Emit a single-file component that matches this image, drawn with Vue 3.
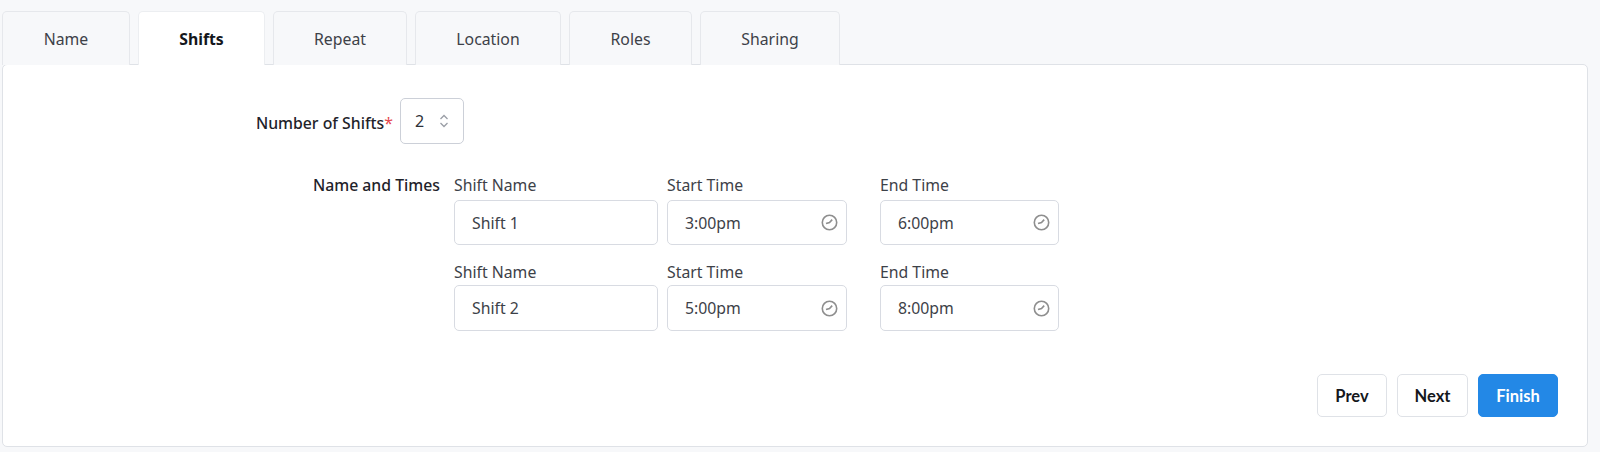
<template>
  <div class="page">
    <div class="tabs">
      <div
        v-for="tab in tabs"
        :key="tab.name"
        class="tab"
        :class="{ active: tab.name === 'Shifts' }"
        :style="{ width: tab.width + 'px' }"
      >
        {{ tab.name }}
      </div>
    </div>

    <div class="card">
      <div class="row count-row">
        <div class="row-label">Number of Shifts<span class="req">*</span></div>
        <div class="number-input">
          <span>2</span>
          <svg class="spin" width="10" height="14" viewBox="0 0 10 14" fill="none" stroke="#9a9ea6" stroke-width="1.3">
            <path d="M1.5 5 5 1.5 8.5 5" />
            <path d="M1.5 9 5 12.5 8.5 9" />
          </svg>
        </div>
      </div>

      <div class="row times-row">
        <div class="row-label">Name and Times</div>
        <div class="shift-list">
          <div v-for="shift in shifts" :key="shift.name" class="shift">
            <div class="field name-field">
              <label>Shift Name</label>
              <div class="input">{{ shift.name }}</div>
            </div>
            <div class="field start-field">
              <label>Start Time</label>
              <div class="input">
                {{ shift.start }}
                <svg class="clock" width="17" height="17" viewBox="0 0 17 17" fill="none" stroke="#8e8e8e" stroke-width="1.6">
                  <circle cx="8.5" cy="8.5" r="7.2" />
                  <path d="M5 9.6 8.5 8.5 11.2 5.6" />
                </svg>
              </div>
            </div>
            <div class="field end-field">
              <label>End Time</label>
              <div class="input">
                {{ shift.end }}
                <svg class="clock" width="17" height="17" viewBox="0 0 17 17" fill="none" stroke="#8e8e8e" stroke-width="1.6">
                  <circle cx="8.5" cy="8.5" r="7.2" />
                  <path d="M5 9.6 8.5 8.5 11.2 5.6" />
                </svg>
              </div>
            </div>
          </div>
        </div>
      </div>

      <div class="actions">
        <button class="btn prev">Prev</button>
        <button class="btn next">Next</button>
        <button class="btn finish">Finish</button>
      </div>
    </div>
  </div>
</template>

<script setup>
const tabs = [
  { name: 'Name', width: 128 },
  { name: 'Shifts', width: 127 },
  { name: 'Repeat', width: 134 },
  { name: 'Location', width: 146 },
  { name: 'Roles', width: 123 },
  { name: 'Sharing', width: 140 },
]

const shifts = [
  { name: 'Shift 1', start: '3:00pm', end: '6:00pm' },
  { name: 'Shift 2', start: '5:00pm', end: '8:00pm' },
]
</script>

<style>
html,
body {
  margin: 0;
  background: #f7f8fa;
}
</style>

<style scoped>
.page {
  height: 452px;
  box-sizing: border-box;
  padding: 11px 12px 5px 2px;
  font-family: "Noto Sans", "Open Sans", sans-serif;
  font-size: 15.8px;
  color: #2e3138;
}

.tabs {
  display: flex;
  gap: 8px;
  height: 53px;
  position: relative;
  z-index: 1;
}

.tab {
  box-sizing: border-box;
  height: 54px;
  display: flex;
  align-items: center;
  justify-content: center;
  background: #f7f8fa;
  border: 1px solid #e6e8ec;
  border-bottom: 0;
  border-radius: 5px 5px 0 0;
  color: #3d4148;
}

.tab.active {
  background: #fff;
  border-color: #eceef1;
  color: #14171c;
  font-weight: 700;
}

.card {
  box-sizing: border-box;
  height: 383px;
  background: #fff;
  border: 1px solid #dfe2e7;
  border-radius: 5px;
  position: relative;
  padding: 33px 0 0;
}

.row {
  display: flex;
  align-items: flex-start;
}

.row-label {
  width: 390px;
  text-align: right;
  font-weight: 500;
  color: #1f232a;
  white-space: nowrap;
}

.count-row {
  align-items: center;
}

.count-row .row-label {
  padding-top: 3px;
}

.req {
  color: #e5484d;
  font-weight: 400;
}

.number-input {
  box-sizing: border-box;
  width: 64px;
  height: 46px;
  margin-left: 7px;
  padding: 0 14px;
  display: flex;
  align-items: center;
  justify-content: space-between;
  border: 1px solid #ccd0d8;
  border-radius: 5px;
  font-size: 16px;
}

.times-row {
  margin-top: 32px;
}

.times-row .row-label {
  width: 437px;
  line-height: 18px;
}

.shift-list {
  margin-left: 14px;
  display: flex;
  flex-direction: column;
  gap: 18px;
}

.shift {
  display: flex;
}

.field label {
  display: block;
  height: 24px;
  line-height: 18px;
  color: #3d4148;
}

.shift + .shift .field label {
  height: 22px;
}

.name-field {
  width: 204px;
  margin-right: 9px;
}

.start-field {
  width: 180px;
  margin-right: 33px;
}

.end-field {
  width: 179px;
}

.input {
  box-sizing: border-box;
  height: 45px;
  padding: 0 17px;
  display: flex;
  align-items: center;
  justify-content: space-between;
  border: 1px solid #d8dbe2;
  border-radius: 5px;
  color: #3d4148;
}

.shift + .shift .input {
  height: 46px;
}

.clock {
  margin-right: -9px;
}

.actions {
  position: absolute;
  right: 29px;
  bottom: 29px;
  display: flex;
  gap: 10px;
}

.btn {
  box-sizing: border-box;
  height: 43px;
  font-family: "Lato", "Noto Sans", sans-serif;
  font-size: 16.5px;
  font-weight: 700;
  border: 1px solid #dfe2e7;
  border-radius: 5px;
  background: #fff;
  color: #14171c;
  padding: 0;
}

.prev {
  width: 70px;
}

.next {
  width: 71px;
}

.finish {
  width: 80px;
  background: #2388e6;
  border-color: #2388e6;
  color: #fff;
}
</style>
